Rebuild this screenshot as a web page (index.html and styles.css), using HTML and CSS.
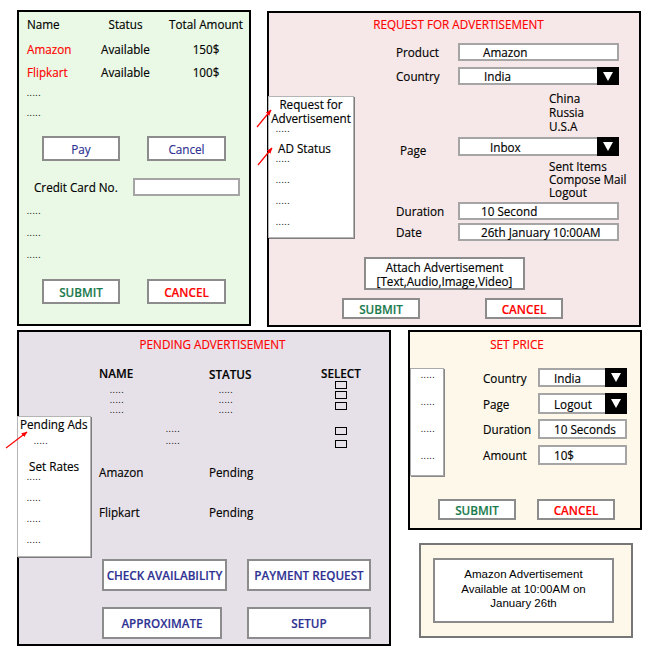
FILE: index.html
```html
<!DOCTYPE html>
<html>
<head>
<meta charset="utf-8">
<title>Advertisement Mockup</title>
<link rel="stylesheet" href="styles.css">
</head>
<body>
<div class="canvas">

  <section class="panel p-pay">
    <div class="pay-table">
      <span>Name</span><span class="mid">Status</span><span class="amt">Total Amount</span>
      <span class="red">Amazon</span><span class="mid">Available</span><span class="amt">150$</span>
      <span class="red">Flipkart</span><span class="mid">Available</span><span class="amt">100$</span>
      <span class="dots span-all">.....</span>
      <span class="dots span-all">.....</span>
    </div>
    <div class="btn-row pay-btns">
      <div class="btn btn-pay blue">Pay</div>
      <div class="btn btn-pay btn-wide blue">Cancel</div>
    </div>
    <div class="cc-row">
      <span class="cc-label">Credit Card No.</span>
      <div class="field cc-field"></div>
    </div>
    <div class="dots-list pay-dots">
      <span class="dots">.....</span>
      <span class="dots">.....</span>
      <span class="dots">.....</span>
    </div>
    <div class="btn-row pay-submit">
      <div class="btn btn-pay green">SUBMIT</div>
      <div class="btn btn-pay btn-wide redtxt">CANCEL</div>
    </div>
  </section>

  <section class="panel p-request">
    <h2 class="title req-title">REQUEST FOR ADVERTISEMENT</h2>
    <div class="req-form">
      <div class="frow r-product">
        <span class="flabel">Product</span>
        <div class="field req-field ind-23">Amazon</div>
      </div>
      <div class="frow r-country">
        <span class="flabel">Country</span>
        <div class="select req-select h18">
          <span class="val ind-24">India</span>
          <span class="caret"><svg width="10" height="9" viewBox="0 0 10 9"><polygon points="0,0 10,0 5,9" fill="#fff"/></svg></span>
        </div>
      </div>
      <div class="options opt-country">
        <div>China</div><div>Russia</div><div>U.S.A</div>
      </div>
      <div class="frow r-page">
        <span class="flabel page-label">Page</span>
        <div class="select req-select h19">
          <span class="val ind-30">Inbox</span>
          <span class="caret"><svg width="10" height="9" viewBox="0 0 10 9"><polygon points="0,0 10,0 5,9" fill="#fff"/></svg></span>
        </div>
      </div>
      <div class="options opt-page">
        <div>Sent Items</div><div>Compose Mail</div><div>Logout</div>
      </div>
      <div class="frow r-duration">
        <span class="flabel">Duration</span>
        <div class="field req-field h19 ind-21">10 Second</div>
      </div>
      <div class="frow r-date">
        <span class="flabel">Date</span>
        <div class="field req-field h20 ind-21">26th January 10:00AM</div>
      </div>
    </div>
    <div class="attach">
      <span>Attach Advertisement</span>
      <span>[Text,Audio,Image,Video]</span>
    </div>
    <div class="btn-row req-btns">
      <div class="btn btn-sm green">SUBMIT</div>
      <div class="btn btn-sm redtxt">CANCEL</div>
    </div>
  </section>

  <section class="panel p-pending">
    <h2 class="title pend-title">PENDING ADVERTISEMENT</h2>
    <div class="pend-table">
      <div class="pcol pc-name">
        <span class="th2">NAME</span>
        <div class="dots-list dgroup">
          <span class="dots">.....</span><span class="dots">.....</span><span class="dots">.....</span>
        </div>
        <div class="dots-list dmid">
          <span class="dots">.....</span><span class="dots">.....</span>
        </div>
        <span class="amz">Amazon</span>
        <span class="flip">Flipkart</span>
      </div>
      <div class="pcol pc-status">
        <span class="th2 th-status">STATUS</span>
        <div class="dots-list dgroup">
          <span class="dots">.....</span><span class="dots">.....</span><span class="dots">.....</span>
        </div>
        <span class="pend1">Pending</span>
        <span class="flip">Pending</span>
      </div>
      <div class="pcol pc-select">
        <span class="th2">SELECT</span>
        <span class="cb cb1"></span>
        <span class="cb cb2"></span>
        <span class="cb cb3"></span>
        <span class="cb cb4"></span>
        <span class="cb cb5"></span>
      </div>
    </div>
    <div class="pend-btns">
      <div class="btn blue bold">CHECK AVAILABILITY</div>
      <div class="btn blue bold">PAYMENT REQUEST</div>
      <div class="btn blue bold btn-approx">APPROXIMATE</div>
      <div class="btn blue bold">SETUP</div>
    </div>
  </section>

  <section class="panel p-price">
    <h2 class="title price-title">SET PRICE</h2>
    <div class="price-body">
      <div class="price-side">
        <span class="dots">.....</span>
        <span class="dots">.....</span>
        <span class="dots">.....</span>
        <span class="dots">.....</span>
      </div>
      <div class="price-form">
        <div class="pr-row">
          <span class="pr-label">Country</span>
          <div class="select pr-field h19">
            <span class="val ind-14">India</span>
            <span class="caret"><svg width="10" height="9" viewBox="0 0 10 9"><polygon points="0,0 10,0 5,9" fill="#fff"/></svg></span>
          </div>
        </div>
        <div class="pr-row pr-page">
          <span class="pr-label">Page</span>
          <div class="select pr-field h21">
            <span class="val ind-14">Logout</span>
            <span class="caret"><svg width="10" height="9" viewBox="0 0 10 9"><polygon points="0,0 10,0 5,9" fill="#fff"/></svg></span>
          </div>
        </div>
        <div class="pr-row pr-duration">
          <span class="pr-label">Duration</span>
          <div class="field pr-field h20 ind-14">10 Seconds</div>
        </div>
        <div class="pr-row pr-amount">
          <span class="pr-label">Amount</span>
          <div class="field pr-field h20 ind-14">10$</div>
        </div>
      </div>
    </div>
    <div class="btn-row price-btns">
      <div class="btn btn-sm green">SUBMIT</div>
      <div class="btn btn-sm redtxt">CANCEL</div>
    </div>
  </section>

  <section class="panel p-note">
    <div class="note-box">Amazon Advertisement<br>Available at 10:00AM on<br>January 26th</div>
  </section>

  <aside class="side side-req">
    <div class="sr-head">Request for<br>Advertisement</div>
    <span class="dots d1">.....</span>
    <div class="sr-ad">AD Status</div>
    <div class="dots-list dlist">
      <span class="dots">.....</span><span class="dots">.....</span><span class="dots">.....</span><span class="dots">.....</span>
    </div>
  </aside>

  <aside class="side side-pend">
    <div class="sp-head">Pending Ads</div>
    <span class="dots d1">.....</span>
    <div class="sp-rates">Set Rates</div>
    <div class="dots-list dlist">
      <span class="dots">.....</span><span class="dots">.....</span><span class="dots">.....</span><span class="dots">.....</span>
    </div>
  </aside>

  <svg class="arrows" width="650" height="650" viewBox="0 0 650 650">
    <defs>
      <marker id="ah" viewBox="0 0 10 10" refX="9" refY="5" markerWidth="5" markerHeight="5" orient="auto">
        <path d="M0,1 L10,5 L0,9 z" fill="#f00"/>
      </marker>
    </defs>
    <line x1="257" y1="127" x2="271" y2="110" stroke="#f00" stroke-width="1.2" marker-end="url(#ah)"/>
    <line x1="258" y1="165" x2="272" y2="148" stroke="#f00" stroke-width="1.2" marker-end="url(#ah)"/>
    <line x1="6" y1="448" x2="27" y2="432" stroke="#f00" stroke-width="1.2" marker-end="url(#ah)"/>
  </svg>

</div>
</body>
</html>
```

FILE: styles.css
```css
* { box-sizing: border-box; }
html, body { margin: 0; padding: 0; background: #fff; }
body {
  font-family: "Open Sans", "Noto Sans", sans-serif;
  font-size: 11.7px;
  line-height: 14px;
  color: #000;
  -webkit-text-stroke: 0.15px currentColor;
}
.canvas { position: relative; width: 650px; height: 650px; overflow: hidden; }

.panel { position: absolute; border: 2px solid #000; }
.p-pay { left: 17px; top: 10px; width: 234px; height: 316px; background: #e9f9e5; }
.p-request { left: 267px; top: 11px; width: 374px; height: 316px; background: #f6e8e8; }
.p-pending { left: 17px; top: 330px; width: 374px; height: 316px; background: #e6e1e8; }
.p-price { left: 408px; top: 330px; width: 234px; height: 200px; background: #fdf8ea; }
.p-note { left: 419px; top: 543px; width: 214px; height: 95px; border-color: #767676; background: #fdf8ea; }

.title { margin: 0; font-size: 11.7px; font-weight: 400; line-height: 14px; color: #f00; text-align: center; }

.dots { display: block; font-size: 6.5px; font-weight: 700; letter-spacing: 1px; line-height: 8px; height: 8px; color: #000; -webkit-text-stroke: 0; }
.dots-list { display: flex; flex-direction: column; }

.red { color: #f00; }
.blue { color: #2e3192; }
.green { color: #1a7a4c; font-weight: 600; }
.redtxt { color: #f00; font-weight: 600; }
.bold { font-weight: 600; }

.btn-row { display: flex; }
.btn {
  display: flex; align-items: center; justify-content: center;
  background: #fff; border: 2px solid #8c8c8c;
}
.btn-pay { width: 78px; height: 25px; }
.btn-wide { width: 79px; }
.btn-sm { width: 78px; height: 21px; }

.field { display: flex; align-items: center; background: #fff; border: 2px solid #a5a5a5; }
.select { display: flex; }
.select .val { flex: 1; display: flex; align-items: center; background: #fff; border: 2px solid #a5a5a5; border-right: 0; }
.caret { width: 22px; background: #000; display: flex; align-items: center; justify-content: center; }
.h18 { height: 18px; }
.h19 { height: 19px; }
.h20 { height: 20px; }
.h21 { height: 21px; }
.ind-14 { padding-left: 14px; }
.ind-21 { padding-left: 21px; }
.ind-23 { padding-left: 23px; }
.ind-24 { padding-left: 24px; }
.ind-30 { padding-left: 30px; }

/* Panel 1: payment */
.pay-table {
  display: grid;
  grid-template-columns: 68px 61px 100px;
  grid-template-rows: 24px 26px 20px 23px 17px;
  align-items: center;
  margin-left: 8px;
}
.pay-table .mid, .pay-table .amt { text-align: center; }
.span-all { grid-column: 1 / -1; }
.pay-btns { margin: 14px 0 0 23px; gap: 27px; }
.cc-row { display: flex; align-items: center; height: 18px; margin: 17px 0 0 15px; }
.cc-label { width: 99px; }
.cc-field { width: 107px; height: 18px; }
.pay-dots { margin: 12px 0 0 8px; gap: 14px; }
.pay-submit { margin: 19px 0 0 23px; gap: 27px; }

/* Panel 2: request */
.req-title { padding: 4px 0 0 9px; }
.req-form { margin: 12px 0 0 127px; }
.frow { display: flex; align-items: center; }
.flabel { width: 62px; }
.req-field { width: 161px; height: 18px; }
.req-select { width: 161px; }
.r-country { margin-top: 6px; }
.options { margin-left: 153px; }
.opt-country { margin-top: 6px; line-height: 14px; }
.r-page { margin-top: 4px; align-items: flex-start; }
.page-label { padding: 6px 0 0 4px; }
.opt-page { margin-top: 3px; line-height: 13px; }
.r-duration { margin-top: 3px; }
.r-date { margin-top: 3px; }
.attach {
  margin: 16px 0 0 95px; width: 161px; height: 33px;
  border: 2px solid #8c8c8c; background: #fff;
  display: flex; flex-direction: column; align-items: center; justify-content: center;
}
.req-btns { margin: 8px 0 0 73px; gap: 65px; }

/* Panel 3: pending */
.pend-title { padding: 5px 0 0 17px; }
.pend-table { display: flex; margin: 15px 0 0 80px; }
.pcol { display: flex; flex-direction: column; }
.pc-name { width: 110px; }
.pc-status { width: 112px; }
.th2 { font-weight: 600; }
.th-status { margin-top: 1px; }
.dgroup { gap: 2px; }
.pc-name .dgroup { margin: 7px 0 0 11px; }
.pc-status .dgroup { margin: 6px 0 0 10px; }
.dmid { margin: 11px 0 0 67px; gap: 4px; }
.amz { margin-top: 19px; }
.pend1 { margin-top: 50px; }
.flip { margin-top: 26px; }
.cb { display: block; width: 12px; height: 8px; border: 1px solid #000; margin-left: 14px; }
.cb1 { margin-top: 1px; }
.cb2 { margin-top: 2px; }
.cb3 { margin-top: 3px; }
.cb4 { margin-top: 17px; }
.cb5 { margin-top: 5px; }
.pend-btns {
  display: grid;
  grid-template-columns: 125px 124px;
  grid-auto-rows: 32px;
  column-gap: 20px; row-gap: 16px;
  margin: 40px 0 0 83px;
}
.btn-approx { width: 120px; }

/* Panel 4: price */
.price-title { padding: 5px 16px 0 0; }
.price-body { display: flex; margin-top: 17px; }
.price-side {
  width: 34px; height: 108px; background: #fff;
  border: 1px solid #aaa; box-shadow: 1px 1px 0 #888;
  padding: 3px 0 0 10px;
  display: flex; flex-direction: column; gap: 19px;
}
.price-form { margin-left: 39px; }
.pr-row { display: flex; align-items: center; }
.pr-label { width: 55px; }
.pr-field { width: 89px; }
.pr-page { margin-top: 6px; }
.pr-duration { margin-top: 5px; }
.pr-amount { margin-top: 6px; }
.price-btns { margin: 23px 0 0 28px; gap: 21px; }

/* Panel 5: note */
.note-box {
  margin: 13px 0 0 12px; width: 181px; height: 65px;
  border: 2px solid #8a8a8a; background: #fff;
  font-family: "Liberation Sans", Arial, sans-serif;
  font-size: 11.5px; font-weight: 400; line-height: 14.5px;
  text-align: center; padding-top: 7px;
  -webkit-text-stroke: 0;
}

/* Sidebars */
.side { position: absolute; background: #fff; border: 1px solid #b4b4b4; box-shadow: 1px 1px 0 #7d7d7d; }
.side-req { left: 268px; top: 96px; width: 86px; height: 142px; }
.side-pend { left: 17px; top: 416px; width: 74px; height: 141px; }
.sr-head { text-align: center; }
.side-req .d1 { margin: 1px 0 0 7px; }
.sr-ad { margin: 7px 0 0 9px; }
.side-req .dlist { margin: 1px 0 0 7px; gap: 13px; }
.sp-head { padding-left: 2px; }
.side-pend .d1 { margin: 7px 0 0 16px; }
.sp-rates { margin: 13px 0 0 11px; }
.side-pend .dlist { margin: 1px 0 0 9px; gap: 13px; }

.arrows { position: absolute; left: 0; top: 0; pointer-events: none; }
```
